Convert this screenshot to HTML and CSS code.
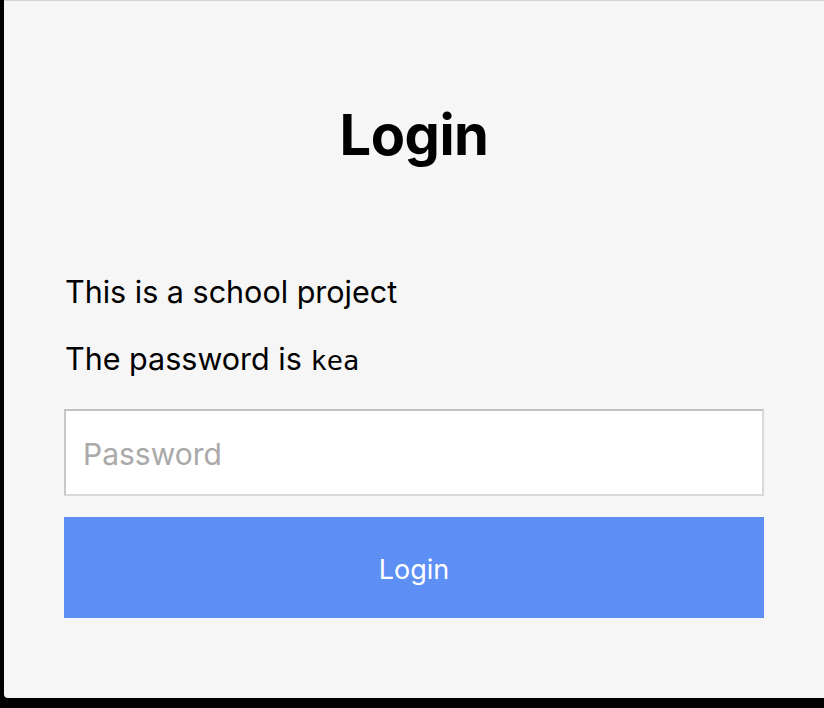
FILE: index.html
```html
<!DOCTYPE html>
<html lang="en">
<head>
<meta charset="utf-8">
<title>Login</title>
<link rel="stylesheet" href="styles.css">
</head>
<body>
<div class="window">
  <main class="login">
    <h1 class="title">Login</h1>
    <p class="note">This is a school project</p>
    <p class="note note-second">The password is <code class="code">kea</code></p>
    <form class="form">
      <input class="input" type="password" placeholder="Password">
      <button class="button" type="button">Login</button>
    </form>
  </main>
</div>
</body>
</html>
```
FILE: styles.css
```css
html, body {
  margin: 0;
  padding: 0;
  background: #000;
  height: 708px;
  overflow: hidden;
}

.window {
  margin-left: 4px;
  height: 697px;
  background: #f6f6f6;
  border-top: 1px solid #d2d2d2;
  border-bottom-left-radius: 4px;
  font-family: Inter, "Noto Sans", sans-serif;
  color: #000;
}

.login {
  width: 700px;
  margin: 0 auto;
  padding-top: 99px;
  display: flex;
  flex-direction: column;
}

.title {
  margin: 0;
  font-size: 56px;
  line-height: 70px;
  font-weight: 700;
  text-align: center;
  letter-spacing: -0.5px;
}

.note {
  margin: 102px 0 0 1px;
  font-size: 30.5px;
  line-height: 40px;
  font-weight: 400;
}

.note-second {
  margin-top: 27px;
}

.code {
  font-family: "DejaVu Sans Mono", monospace;
  font-size: 27px;
}

.form {
  margin-top: 28px;
  display: flex;
  flex-direction: column;
  gap: 21px;
}

.input {
  box-sizing: border-box;
  height: 87px;
  width: 700px;
  margin: 0;
  padding: 2px 17px 0;
  border: 2px solid;
  border-color: #c2c2c2 #d9d9d9 #d9d9d9 #c8c8c8;
  background: #fff;
  font-family: Inter, "Noto Sans", sans-serif;
  font-size: 30px;
  color: #000;
  outline: none;
}

.input::placeholder {
  color: #a9a9a9;
}

.button {
  height: 101px;
  width: 700px;
  margin: 0;
  padding: 4px 0 0;
  border: none;
  background: #5e8ff5;
  color: #fff;
  font-family: Inter, "Noto Sans", sans-serif;
  font-size: 27px;
  cursor: pointer;
}
```
